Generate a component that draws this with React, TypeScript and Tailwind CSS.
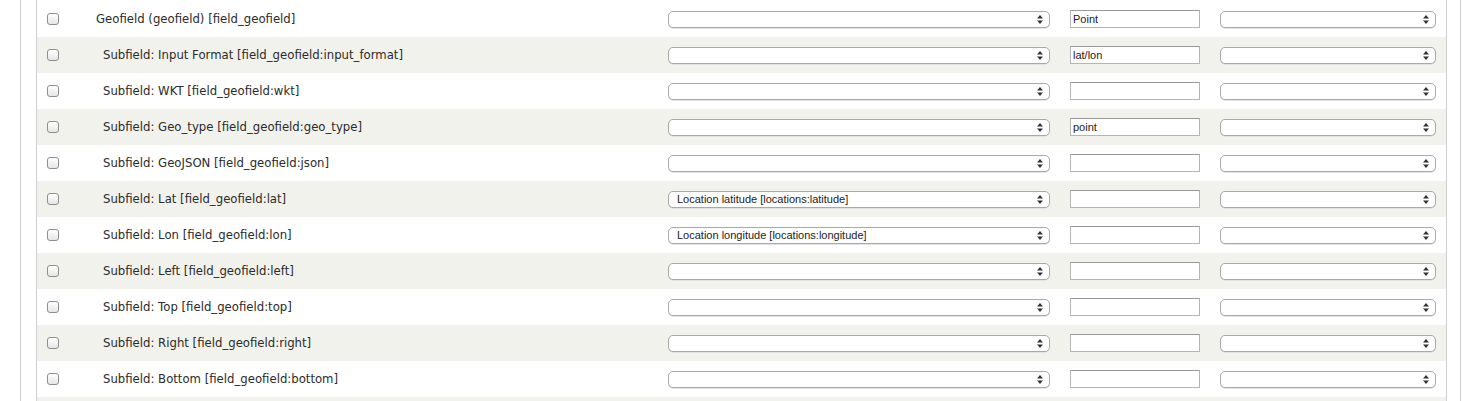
import React from "react";

interface FieldRow {
  label: string;
  sub?: boolean;
  source?: string;
  value?: string;
}

const rows: FieldRow[] = [
  { label: "Geofield (geofield) [field_geofield]", value: "Point" },
  { label: "Subfield: Input Format [field_geofield:input_format]", sub: true, value: "lat/lon" },
  { label: "Subfield: WKT [field_geofield:wkt]", sub: true },
  { label: "Subfield: Geo_type [field_geofield:geo_type]", sub: true, value: "point" },
  { label: "Subfield: GeoJSON [field_geofield:json]", sub: true },
  { label: "Subfield: Lat [field_geofield:lat]", sub: true, source: "Location latitude [locations:latitude]" },
  { label: "Subfield: Lon [field_geofield:lon]", sub: true, source: "Location longitude [locations:longitude]" },
  { label: "Subfield: Left [field_geofield:left]", sub: true },
  { label: "Subfield: Top [field_geofield:top]", sub: true },
  { label: "Subfield: Right [field_geofield:right]", sub: true },
  { label: "Subfield: Bottom [field_geofield:bottom]", sub: true },
];

const Checkbox = () => (
  <span className="block h-[12px] w-[12px] rounded-[3px] border border-[#8e8e8e] bg-gradient-to-b from-white to-[#e6e6e6] shadow-[inset_0_1px_0_#fff]" />
);

const Arrows = () => (
  <svg width="6" height="9" viewBox="0 0 6 9" className="shrink-0">
    <path d="M3 0 L6 3.5 L0 3.5 Z" fill="#333" />
    <path d="M0 5.5 L6 5.5 L3 9 Z" fill="#333" />
  </svg>
);

const Select = ({ text, className }: { text?: string; className: string }) => (
  <div
    className={`flex h-[17px] items-center justify-between rounded-[5px] border border-[#a9a9a9] bg-white pl-[8px] pr-[6px] shadow-[0_1px_0_#e4e4e4] ${className}`}
  >
    <span className="truncate font-['Liberation_Sans',Arial,sans-serif] text-[11px] leading-none text-[#222]">
      {text}
    </span>
    <Arrows />
  </div>
);

export default function App() {
  return (
    <div className="h-[401px] overflow-hidden bg-white font-['DejaVu_Sans',sans-serif] text-[#2b2b2b]">
      <div className="ml-[20px] w-[1441px] border-l border-r border-[#cfcfcf] pl-[15px] pr-[13px]">
        <div className="border-l border-r border-[#cfcfcf] pt-[1px]">
          {rows.map((row, i) => (
            <div
              key={row.label}
              className={`flex h-[36px] items-center ${i % 2 === 1 ? "bg-[#f2f2ed]" : "bg-white"}`}
            >
              <div className="w-[59px] shrink-0 pl-[10px]">
                <Checkbox />
              </div>
              <div
                className={`mt-[2px] w-[572px] shrink-0 text-[11.7px] leading-none ${row.sub ? "pl-[7px]" : ""}`}
              >
                {row.label}
              </div>
              <Select text={row.source} className="w-[382px] shrink-0" />
              <div className="ml-[20px] flex h-[18px] w-[130px] shrink-0 items-center border border-[#b5b5b5] border-t-[#999] bg-white px-[2px] font-['Liberation_Sans',Arial,sans-serif] text-[11px] leading-none text-[#222]">
                {row.value}
              </div>
              <Select className="ml-[20px] w-[216px] shrink-0" />
            </div>
          ))}
          <div className="h-[36px] bg-[#f2f2ed]" />
        </div>
      </div>
    </div>
  );
}
